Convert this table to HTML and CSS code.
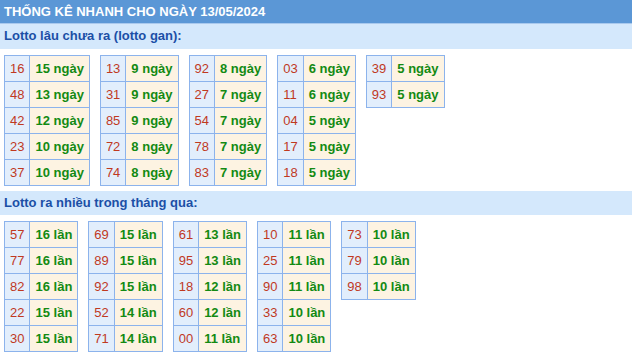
FILE: index.html
```html
<!DOCTYPE html>
<html lang="vi">
<head>
<meta charset="utf-8">
<title>Thống kê nhanh</title>
<link rel="stylesheet" href="styles.css">
</head>
<body>
<div class="title">THỐNG KÊ NHANH CHO NGÀY 13/05/2024</div>
<div class="sub sub-first">Lotto lâu chưa ra (lotto gan):</div>
<div class="group">
  <table class="lt"><tr><td class="n">16</td><td class="v">15 ngày</td></tr><tr><td class="n">48</td><td class="v">13 ngày</td></tr><tr><td class="n">42</td><td class="v">12 ngày</td></tr><tr><td class="n">23</td><td class="v">10 ngày</td></tr><tr><td class="n">37</td><td class="v">10 ngày</td></tr></table>
  <table class="lt"><tr><td class="n">13</td><td class="v">9 ngày</td></tr><tr><td class="n">31</td><td class="v">9 ngày</td></tr><tr><td class="n">85</td><td class="v">9 ngày</td></tr><tr><td class="n">72</td><td class="v">8 ngày</td></tr><tr><td class="n">74</td><td class="v">8 ngày</td></tr></table>
  <table class="lt"><tr><td class="n">92</td><td class="v">8 ngày</td></tr><tr><td class="n">27</td><td class="v">7 ngày</td></tr><tr><td class="n">54</td><td class="v">7 ngày</td></tr><tr><td class="n">78</td><td class="v">7 ngày</td></tr><tr><td class="n">83</td><td class="v">7 ngày</td></tr></table>
  <table class="lt"><tr><td class="n">03</td><td class="v">6 ngày</td></tr><tr><td class="n">11</td><td class="v">6 ngày</td></tr><tr><td class="n">04</td><td class="v">5 ngày</td></tr><tr><td class="n">17</td><td class="v">5 ngày</td></tr><tr><td class="n">18</td><td class="v">5 ngày</td></tr></table>
  <table class="lt"><tr><td class="n">39</td><td class="v">5 ngày</td></tr><tr><td class="n">93</td><td class="v">5 ngày</td></tr></table>
</div>
<div class="sub">Lotto ra nhiều trong tháng qua:</div>
<div class="group">
  <table class="lt"><tr><td class="n">57</td><td class="v">16 lần</td></tr><tr><td class="n">77</td><td class="v">16 lần</td></tr><tr><td class="n">82</td><td class="v">16 lần</td></tr><tr><td class="n">22</td><td class="v">15 lần</td></tr><tr><td class="n">30</td><td class="v">15 lần</td></tr></table>
  <table class="lt"><tr><td class="n">69</td><td class="v">15 lần</td></tr><tr><td class="n">89</td><td class="v">15 lần</td></tr><tr><td class="n">92</td><td class="v">15 lần</td></tr><tr><td class="n">52</td><td class="v">14 lần</td></tr><tr><td class="n">71</td><td class="v">14 lần</td></tr></table>
  <table class="lt"><tr><td class="n">61</td><td class="v">13 lần</td></tr><tr><td class="n">95</td><td class="v">13 lần</td></tr><tr><td class="n">18</td><td class="v">12 lần</td></tr><tr><td class="n">60</td><td class="v">12 lần</td></tr><tr><td class="n">00</td><td class="v">11 lần</td></tr></table>
  <table class="lt"><tr><td class="n">10</td><td class="v">11 lần</td></tr><tr><td class="n">25</td><td class="v">11 lần</td></tr><tr><td class="n">90</td><td class="v">11 lần</td></tr><tr><td class="n">33</td><td class="v">10 lần</td></tr><tr><td class="n">63</td><td class="v">10 lần</td></tr></table>
  <table class="lt"><tr><td class="n">73</td><td class="v">10 lần</td></tr><tr><td class="n">79</td><td class="v">10 lần</td></tr><tr><td class="n">98</td><td class="v">10 lần</td></tr></table>
</div>
</body>
</html>
```
FILE: styles.css
```css
html, body {
  margin: 0;
  padding: 0;
  background: #ffffff;
}
body {
  font-family: "Liberation Sans", Arial, sans-serif;
  font-size: 13px;
}
.title {
  box-sizing: border-box;
  height: 24px;
  line-height: 23px;
  padding-left: 4px;
  background: #5b97d6;
  border-bottom: 1px solid #a9c9ee;
  color: #ffffff;
  font-weight: bold;
  white-space: nowrap;
}
.sub {
  box-sizing: border-box;
  height: 24px;
  line-height: 24px;
  padding-left: 4px;
  background: #d4e8fc;
  color: #1b4fa6;
  font-weight: bold;
}
.sub-first {
  height: 25px;
  line-height: 24px;
}
.group {
  display: flex;
  align-items: flex-start;
  gap: 10px;
  padding: 6px 4px 5px;
}
.lt {
  border-collapse: collapse;
}
.lt td {
  height: 25px;
  padding: 0 5px;
  border: 1px solid #8cb3ec;
  white-space: nowrap;
  vertical-align: middle;
}
.lt .n {
  background: #e2eefc;
  color: #c0391f;
}
.lt .v {
  background: #fdf3e2;
  color: #138a13;
  font-weight: bold;
}
```
